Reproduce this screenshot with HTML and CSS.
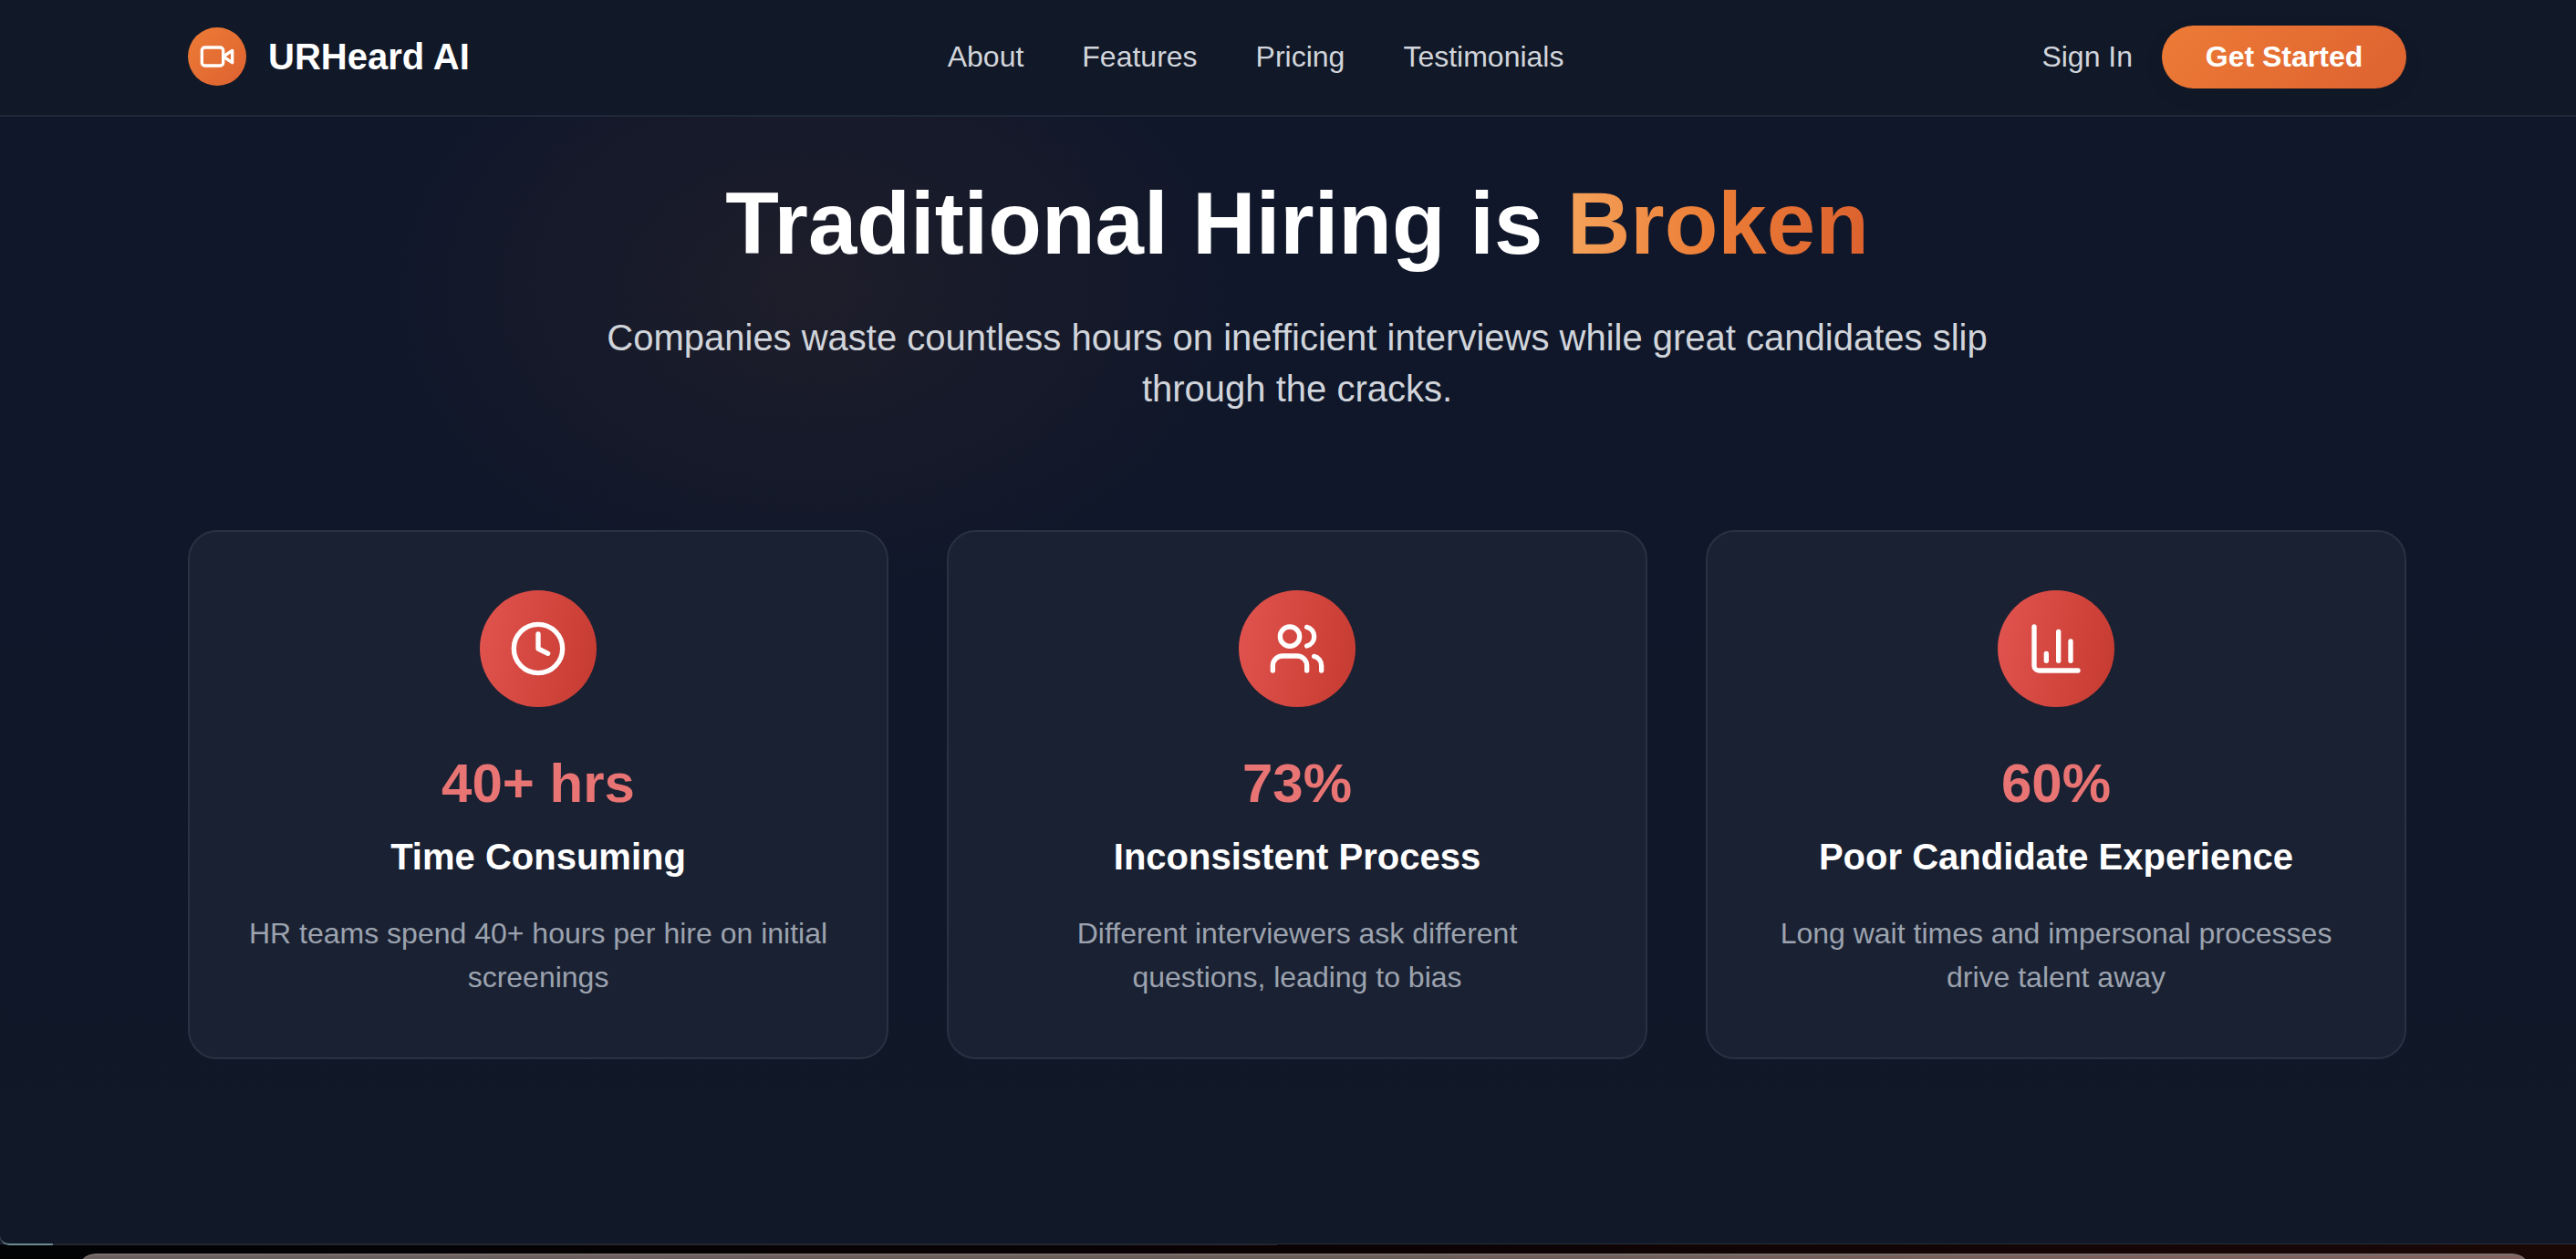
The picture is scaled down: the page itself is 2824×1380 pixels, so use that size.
FILE: index.html
```html
<!DOCTYPE html>
<html lang="en">
<head>
<meta charset="utf-8">
<title>URHeard AI</title>
<link rel="stylesheet" href="styles.css">
</head>
<body>
<div class="page">
  <header class="nav">
    <div class="nav-inner">
      <a class="brand" href="#">
        <span class="brand-mark">
          <svg class="icon-video" viewBox="0 0 24 24"><path d="m22 8-6 4 6 4V8Z"/><rect x="2" y="6" width="14" height="12" rx="2"/></svg>
        </span>
        <span class="brand-name">URHeard AI</span>
      </a>
      <nav class="links">
        <a href="#">About</a>
        <a href="#">Features</a>
        <a href="#">Pricing</a>
        <a href="#">Testimonials</a>
      </nav>
      <div class="actions">
        <a class="signin" href="#">Sign In</a>
        <a class="cta" href="#">Get Started</a>
      </div>
    </div>
  </header>
  <main class="problem">
    <div class="hero">
      <h1 class="title">Traditional Hiring is <span class="accent">Broken</span></h1>
      <p class="subtitle">Companies waste countless hours on inefficient interviews while great candidates slip through the cracks.</p>
    </div>
    <div class="cards">
      <article class="card">
        <div class="card-icon"><svg viewBox="0 0 24 24"><circle cx="12" cy="12" r="10"/><polyline points="12 6 12 12 16 14"/></svg></div>
        <div class="stat">40+ hrs</div>
        <h3 class="card-title">Time Consuming</h3>
        <p class="card-text">HR teams spend 40+ hours per hire on initial screenings</p>
      </article>
      <article class="card">
        <div class="card-icon"><svg viewBox="0 0 24 24"><path d="M16 21v-2a4 4 0 0 0-4-4H6a4 4 0 0 0-4 4v2"/><circle cx="9" cy="7" r="4"/><path d="M22 21v-2a4 4 0 0 0-3-3.87"/><path d="M16 3.13a4 4 0 0 1 0 7.75"/></svg></div>
        <div class="stat">73%</div>
        <h3 class="card-title">Inconsistent Process</h3>
        <p class="card-text">Different interviewers ask different questions, leading to bias</p>
      </article>
      <article class="card">
        <div class="card-icon"><svg viewBox="0 0 24 24"><path d="M3 3v16a2 2 0 0 0 2 2h16"/><path d="M18 17V9"/><path d="M13 17V5"/><path d="M8 17v-3"/></svg></div>
        <div class="stat">60%</div>
        <h3 class="card-title">Poor Candidate Experience</h3>
        <p class="card-text">Long wait times and impersonal processes drive talent away</p>
      </article>
    </div>
  </main>
  <div class="dock-strip"><div class="dock-bar"></div></div>
</div>
</body>
</html>
```
FILE: styles.css
```css
* { box-sizing: border-box; }
html, body { margin: 0; padding: 0; height: 100%; background: #000; }
body { font-family: "Liberation Sans", Arial, sans-serif; color: #fff; overflow: hidden; }
a { color: inherit; text-decoration: none; }
.page { height: 1380px; display: flex; flex-direction: column; }

.nav { height: 128px; padding-left: 20px; background: #111827; border-bottom: 2px solid #1f2937; flex: none; }
.nav-inner { width: 2432px; margin: 0 auto; height: 124px; display: flex; justify-content: space-between; align-items: center; }
.brand { display: flex; align-items: center; gap: 24px; }
.brand-mark { width: 64px; height: 64px; border-radius: 50%; background: linear-gradient(135deg, #ed7b36, #dd6230); display: flex; align-items: center; justify-content: center; }
.icon-video { width: 40px; height: 40px; fill: none; stroke: #fff; stroke-width: 2; stroke-linecap: round; stroke-linejoin: round; }
.brand-name { font-size: 40px; font-weight: 700; line-height: 56px; }
.links { display: flex; gap: 64px; font-size: 32px; line-height: 48px; color: #d1d5db; }
.actions { display: flex; align-items: center; gap: 32px; font-size: 32px; }
.signin { color: #d1d5db; }
.cta { width: 268px; height: 69px; border-radius: 35px; background: linear-gradient(135deg, #ed7b36, #dd6230); color: #fff; font-weight: 700; display: flex; align-items: center; justify-content: center; box-shadow: 0 8px 24px rgba(0,0,0,.06); }

.problem { position: relative; flex: none; height: 1236px; padding: 69px 0 0 20px;
  background:
    radial-gradient(ellipse 480px 340px at 890px 190px, rgba(237,123,54,.065), rgba(237,123,54,0) 100%),
    linear-gradient(180deg, #10172a 0%, #0f1729 50%, #111827 100%);
  box-shadow: inset 0 -1px 0 #262e3b; }
.problem::before { content: ""; position: absolute; left: 0; bottom: -1px; width: 58px; height: 8px; border-bottom: 2px solid #6f8994; border-bottom-left-radius: 10px; }
.problem::after { content: ""; position: absolute; left: 58px; bottom: -1px; width: 1342px; height: 2px; background: #23262e; }
.hero { width: 2432px; margin: 0 auto 127px; text-align: center; }
.title { margin: 0 0 49px; font-size: 96px; line-height: 96px; font-weight: 700; }
.accent { background: linear-gradient(90deg, #f4a25a 0%, #ed7f38 45%, #dc612e 100%); -webkit-background-clip: text; background-clip: text; color: transparent; }
.subtitle { margin: 0 auto; width: 1536px; font-size: 40px; line-height: 56px; color: #d1d5db; }

.cards { width: 2432px; margin: 0 auto; display: grid; grid-template-columns: repeat(3, 1fr); gap: 64px; }
.card { padding: 64px; background: #1a2132; border: 2px solid #283241; border-radius: 32px; text-align: center; }
.card-icon { width: 128px; height: 128px; margin: 0 auto 48px; border-radius: 50%; background: linear-gradient(100deg, #e2544f, #c53a30); display: flex; align-items: center; justify-content: center; }
.card-icon svg { width: 64px; height: 64px; fill: none; stroke: #fff; stroke-width: 2; stroke-linecap: round; stroke-linejoin: round; }
.stat { margin-bottom: 16px; font-size: 60px; line-height: 72px; font-weight: 700; color: #e87474; }
.card-title { margin: 0 0 32px; font-size: 40px; line-height: 56px; font-weight: 700; }
.card-text { margin: 0; font-size: 32px; line-height: 48px; color: #9ca3af; }

.dock-strip { flex: 1; padding: 10px 50px 0 85px; background: linear-gradient(90deg, #010305 0%, #0a0204 45%, #1a0806 100%); }
.dock-bar { height: 20px; border-top: 2px solid #7a706d; border-radius: 24px 24px 0 0; background: linear-gradient(90deg, #6a615f, #6a5c59 50%, #84635e); }
```
